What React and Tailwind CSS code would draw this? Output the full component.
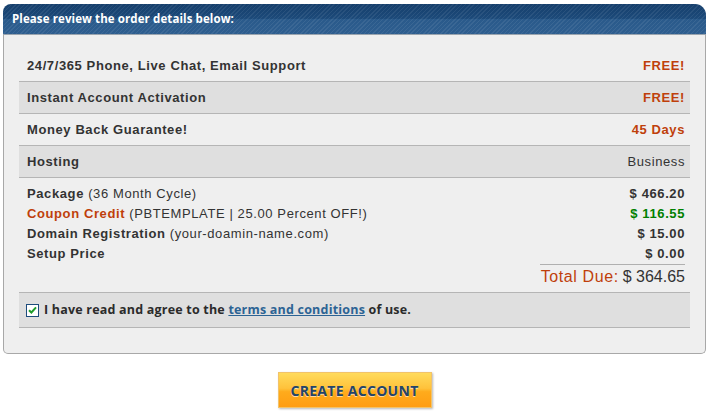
export default function App() {
    const items = [
        { label: '24/7/365 Phone, Live Chat, Email Support', value: 'FREE!', alt: false, accent: true },
        { label: 'Instant Account Activation', value: 'FREE!', alt: true, accent: true },
        { label: 'Money Back Guarantee!', value: '45 Days', alt: false, accent: true },
        { label: 'Hosting', value: 'Business', alt: true, accent: false },
    ];

    return (
        <div className="w-[709px] h-[411px] bg-white pt-[4px] px-[3px] font-['Liberation_Sans',Arial,sans-serif] text-[#333]">
            <div className="w-[703px]">
                {/* header bar */}
                <div className="h-[31px] rounded-tl-[8px] rounded-tr-[11px] border-b border-[#9aa4ae] bg-[image:repeating-linear-gradient(135deg,rgba(255,255,255,0.07)_0px,rgba(255,255,255,0.07)_1px,transparent_1px,transparent_3px),linear-gradient(#163f6c,#1c4a7a_48%,#2a5a8b_52%,#2e5e8f)] flex items-center pl-[9px]">
                    <span className="text-white font-bold text-[11.5px] font-['Open_Sans',sans-serif] tracking-[0.1px]">
                        Please review the order details below:
                    </span>
                </div>

                {/* body */}
                <div className="bg-[#efefef] border-x border-b border-[#a8a8a8] rounded-b-[5px] px-[15px] pt-[15px] pb-[25px] tracking-[0.6px]">
                    {items.map((it) => (
                        <div
                            key={it.label}
                            className={`h-[32px] border-b border-[#b5b5b5] flex items-center justify-between pl-[8px] pr-[5px] text-[13px] ${it.alt ? 'bg-[#dfdfdf]' : 'bg-[#efefef]'}`}
                        >
                            <span className="font-bold">{it.label}</span>
                            <span className={it.accent ? 'font-bold text-[#bf3f0b]' : 'text-[#333]'}>{it.value}</span>
                        </div>
                    ))}

                    <div className="pt-[6px] pl-[8px] pr-[5px] text-[13px]">
                        <div className="h-[20px] flex items-center justify-between">
                            <span><b>Package</b> (36 Month Cycle)</span>
                            <b>$ 466.20</b>
                        </div>
                        <div className="h-[20px] flex items-center justify-between">
                            <span><b className="text-[#bf3f0b]">Coupon Credit</b> (PBTEMPLATE | 25.00 Percent OFF!)</span>
                            <b className="text-[#008000]">$ 116.55</b>
                        </div>
                        <div className="h-[20px] flex items-center justify-between">
                            <span><b>Domain Registration</b> (your-doamin-name.com)</span>
                            <b>$ 15.00</b>
                        </div>
                        <div className="h-[20px] flex items-center justify-between">
                            <b>Setup Price</b>
                            <b>$ 0.00</b>
                        </div>
                        <div className="flex justify-end">
                            <div className="w-[145px] border-t border-[#b0b0b0] h-[24px] flex items-center justify-end text-[16px] tracking-normal whitespace-nowrap">
                                <span className="text-[#bf3f0b] tracking-[0.6px]">Total Due:</span>
                                <span className="ml-[4px]">$ 364.65</span>
                            </div>
                        </div>
                    </div>

                    <div className="mt-[4px] h-[36px] bg-[#dfdfdf] border-y border-[#b5b5b5] flex items-center pl-[7px] tracking-normal">
                        <span className="w-[13px] h-[13px] border border-[#1d4c7c] bg-white flex items-center justify-center">
                            <svg width="9" height="8" viewBox="0 0 9 8">
                                <path d="M1 4.2 L3.4 6.5 L8 1.3" fill="none" stroke="#1e9c2a" strokeWidth="2" />
                            </svg>
                        </span>
                        <span className="ml-[5px] text-[12.5px] font-bold font-['Open_Sans',sans-serif] text-[#2b2b2b] tracking-[0.2px]">
                            I have read and agree to the{' '}
                            <a href="#" className="text-[#2c6394] underline">terms and conditions</a>{' '}
                            of use.
                        </span>
                    </div>
                </div>

                {/* button */}
                <div className="flex justify-center mt-[18px]">
                    <button className="w-[154px] h-[36px] border border-[#f2c36a] shadow-[1px_1px_2px_#b9b9b9] bg-[linear-gradient(#ffdb5c,#ffc23b_45%,#ffab1c_55%,#ff9d12)] text-[#24446a] font-bold text-[14px] tracking-[0.3px] font-['Open_Sans',sans-serif] [text-shadow:0_1px_0_rgba(255,255,255,0.6)]">
                        CREATE ACCOUNT
                    </button>
                </div>
            </div>
        </div>
    );
}
